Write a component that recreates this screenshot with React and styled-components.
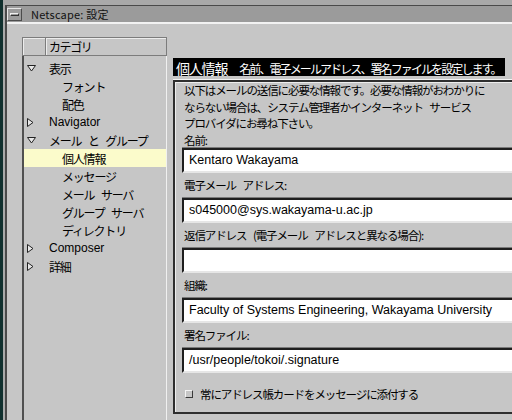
import styled, { createGlobalStyle } from "styled-components";

const Global = createGlobalStyle`
    body {
        margin: 0;
        background: #c6c6c6;
    }
`;

const jp = `"Noto Sans CJK JP", "Liberation Sans", sans-serif`;

const Screen = styled.div`
    width: 512px;
    height: 420px;
    overflow: hidden;
    background: #a9a9a9;
    border-left: 3px solid #10302e;
    padding-top: 5px;
    box-sizing: border-box;
    display: flex;
`;

const Inner = styled.div`
    flex: 1;
    display: flex;
    flex-direction: column;
    margin-left: 2px;
    border-left: 2px solid #4a4a4a;
    border-top: 1px solid #4a4a4a;
    background: #c6c6c6;
    min-width: 0;
`;

const TitleBar = styled.div`
    height: 16px;
    display: flex;
    align-items: center;
    background: #9b9b9b;
    border-bottom: 2px solid #f2f2f2;
`;

const MenuButton = styled.div`
    width: 15px;
    height: 13px;
    box-sizing: border-box;
    border: 1px solid;
    border-color: #e6e6e6 #4c4c4c #4c4c4c #e6e6e6;
    display: flex;
    align-items: center;
    justify-content: center;
    span {
        width: 9px;
        height: 3px;
        box-sizing: border-box;
        border: 1px solid;
        border-color: #f0f0f0 #333 #333 #f0f0f0;
    }
`;

const Title = styled.div`
    margin-left: 9px;
    font-family: ${jp};
    font-size: 11px;
    letter-spacing: 0.2px;
    color: #111;
`;

const Body = styled.div`
    flex: 1;
    display: flex;
    padding: 13px 0 0 15px;
    min-width: 0;
`;

const Sidebar = styled.div`
    width: 145px;
    flex-shrink: 0;
    display: flex;
    flex-direction: column;
`;

const SideHeader = styled.div`
    height: 19px;
    box-sizing: border-box;
    display: flex;
    border: 1px solid #7c7c7c;
    box-shadow: inset 1px 1px 0 #ececec;
    font-family: ${jp};
    font-size: 12px;
    letter-spacing: -1.4px;
    color: #000;
    .cell {
        width: 22px;
        border-right: 1px solid #7c7c7c;
        box-shadow: 1px 0 0 #ececec;
    }
    .label {
        padding-left: 3px;
        line-height: 17px;
    }
`;

const Tree = styled.div`
    flex: 1;
    padding-top: 3px;
    border-left: 2px solid #505050;
    border-right: 1px solid #f0f0f0;
`;

const TreeRow = styled.div`
    height: 18px;
    display: flex;
    align-items: center;
    padding-left: ${(p) => (p.$child ? 38 : 3)}px;
    background: ${(p) => (p.$selected ? "#fbfbcb" : "transparent")};
    font-family: ${(p) => (p.$latin ? `"Liberation Sans", sans-serif` : jp)};
    font-size: 12px;
    letter-spacing: ${(p) => (p.$latin ? "0" : "-1.2px")};
    word-spacing: ${(p) => (p.$latin ? "0" : "5px")};
    color: #000;
    white-space: pre;
`;

const Arrow = styled.div`
    width: 22px;
    height: 18px;
    display: flex;
    align-items: center;
`;

const Panel = styled.div`
    width: 360px;
    flex-shrink: 0;
    margin: 21px 0 0 6px;
    display: flex;
    flex-direction: column;
    align-self: flex-start;
`;

const PanelHead = styled.div`
    border-bottom: 1px solid #f4f4f4;
    padding-bottom: 1px;
`;

const HeadText = styled.div`
    display: inline-block;
    height: 18px;
    line-height: 18px;
    padding: 0 4px 0 3px;
    background: #000;
    color: #fff;
    font-family: ${jp};
    white-space: nowrap;
    b {
        font-weight: normal;
        font-size: 14px;
        letter-spacing: -1.2px;
        margin-right: 12px;
    }
    span {
        font-size: 12px;
        letter-spacing: -1.9px;
    }
`;

const FieldBox = styled.div`
    border: 2px solid #2e2e2e;
    border-right: none;
    box-shadow: inset 1px 1px 0 #ededed;
    padding: 0 0 10px 9px;
`;

const Intro = styled.div`
    font-family: ${jp};
    font-size: 11.5px;
    line-height: 16.5px;
    letter-spacing: -1.1px;
    word-spacing: 5px;
    color: #000;
    white-space: nowrap;
`;

const Label = styled.div`
    height: ${(p) => (p.$tight ? 16.5 : 25)}px;
    line-height: ${(p) => (p.$tight ? 16.5 : 25)}px;
    font-family: ${jp};
    font-size: 11.5px;
    letter-spacing: -1.1px;
    word-spacing: 5px;
    color: #000;
    white-space: pre;
`;

const Field = styled.div`
    height: 25px;
    box-sizing: border-box;
    margin-left: -2px;
    background: #fff;
    border-top: 2px solid #1e1e1e;
    border-left: 2px solid #1e1e1e;
    border-bottom: 2px solid #e6e6e6;
    box-shadow: 0 -1px 0 #7a7a7a;
    padding-left: 5px;
    line-height: 21px;
    font-family: "Liberation Sans", sans-serif;
    font-size: 12.5px;
    color: #000;
    white-space: nowrap;
`;

const CheckRow = styled.div`
    margin-top: 13px;
    height: 16px;
    display: flex;
    align-items: center;
    gap: 7px;
    font-family: ${jp};
    font-size: 11.5px;
    letter-spacing: -1.1px;
    color: #000;
`;

const Check = styled.div`
    width: 8px;
    height: 8px;
    margin-left: 1px;
    box-sizing: border-box;
    border: 1px solid;
    border-color: #f4f4f4 #3a3a3a #3a3a3a #f4f4f4;
    background: #c6c6c6;
`;

const Down = () => (
    <svg width="9" height="7" viewBox="0 0 9 7">
        <polygon points="0.5,0.5 8.5,0.5 4.5,6" fill="#e8e8e8" stroke="#222" strokeWidth="1" />
    </svg>
);

const Right = () => (
    <svg width="7" height="9" viewBox="0 0 7 9">
        <polygon points="0.5,0.5 0.5,8.5 6,4.5" fill="#e8e8e8" stroke="#222" strokeWidth="1" />
    </svg>
);

const tree = [
    { label: "表示", open: true },
    { label: "フォント", child: true },
    { label: "配色", child: true },
    { label: "Navigator", open: false, latin: true },
    { label: "メール と グループ", open: true },
    { label: "個人情報", child: true, selected: true },
    { label: "メッセージ", child: true },
    { label: "メール サーバ", child: true },
    { label: "グループ サーバ", child: true },
    { label: "ディレクトリ", child: true },
    { label: "Composer", open: false, latin: true },
    { label: "詳細", open: false },
];

const fields = [
    { label: "名前:", value: "Kentaro Wakayama" },
    { label: "電子メール アドレス:", value: "s045000@sys.wakayama-u.ac.jp" },
    { label: "返信アドレス (電子メール アドレスと異なる場合):", value: "" },
    { label: "組織:", value: "Faculty of Systems Engineering, Wakayama University" },
    { label: "署名ファイル:", value: "/usr/people/tokoi/.signature" },
];

const App = () => {
    return (
        <Screen>
            <Global />
            <Inner>
                <TitleBar>
                    <MenuButton>
                        <span />
                    </MenuButton>
                    <Title>Netscape: 設定</Title>
                </TitleBar>
                <Body>
                    <Sidebar>
                        <SideHeader>
                            <div className="cell" />
                            <div className="label">カテゴリ</div>
                        </SideHeader>
                        <Tree>
                            {tree.map((item) => (
                                <TreeRow
                                    key={item.label}
                                    $child={item.child}
                                    $selected={item.selected}
                                    $latin={item.latin}
                                >
                                    {!item.child && <Arrow>{item.open ? <Down /> : <Right />}</Arrow>}
                                    {item.label}
                                </TreeRow>
                            ))}
                        </Tree>
                    </Sidebar>
                    <Panel>
                        <PanelHead>
                            <HeadText>
                                <b>個人情報</b>
                                <span>名前、電子メールアドレス、署名ファイルを設定します。</span>
                            </HeadText>
                        </PanelHead>
                        <FieldBox>
                            <Intro>
                                以下はメールの送信に必要な情報です。必要な情報がおわかりに
                                <br />
                                ならない場合は、システム管理者かインターネット サービス
                                <br />
                                プロバイダにお尋ね下さい。
                            </Intro>
                            {fields.map((f, i) => (
                                <div key={f.label}>
                                    <Label $tight={i === 0}>{f.label}</Label>
                                    <Field>{f.value}</Field>
                                </div>
                            ))}
                            <CheckRow>
                                <Check />
                                常にアドレス帳カードをメッセージに添付する
                            </CheckRow>
                        </FieldBox>
                    </Panel>
                </Body>
            </Inner>
        </Screen>
    );
};

export default App;
